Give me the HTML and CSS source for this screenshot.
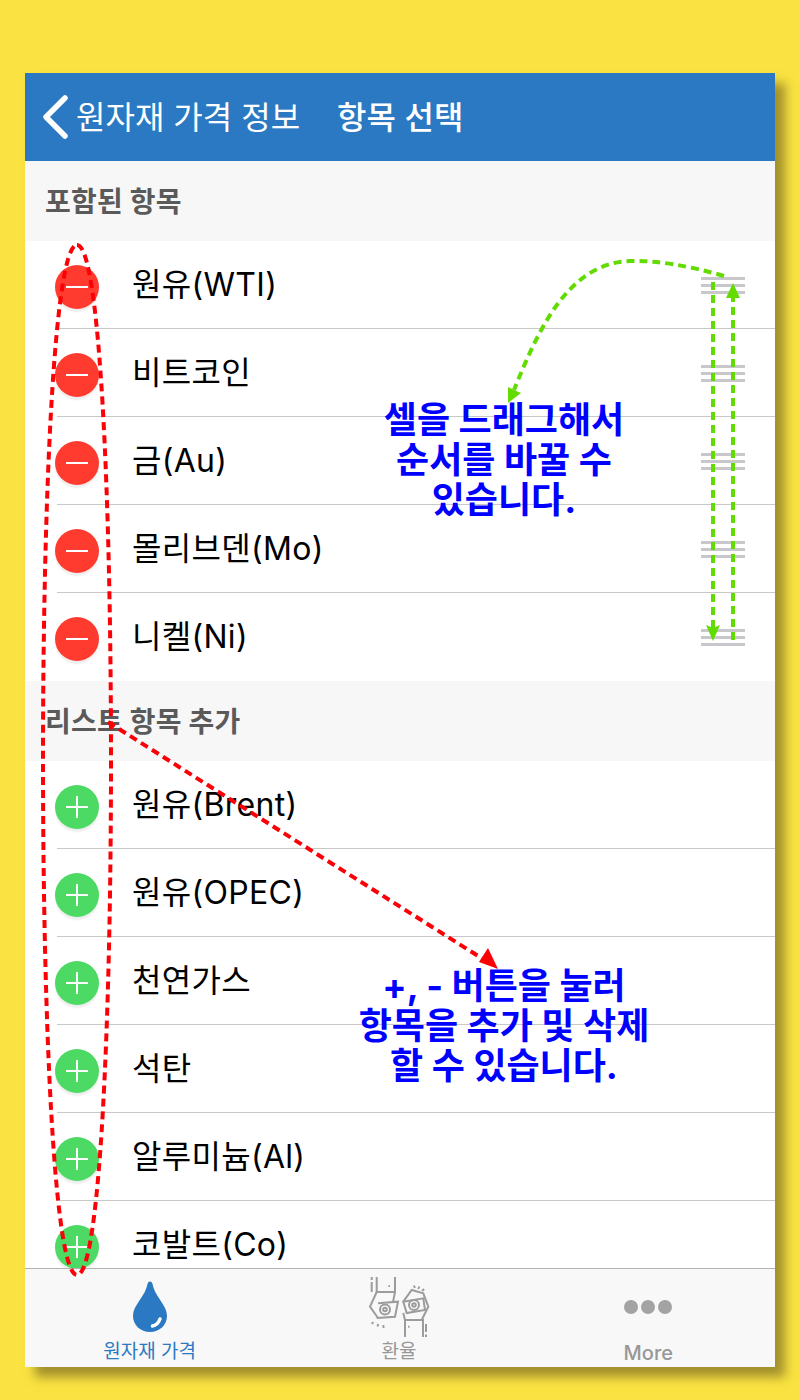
FILE: index.html
```html
<!DOCTYPE html>
<html>
<head>
  <title>항목 선택</title>
  <link rel="stylesheet" href="styles.css">
</head>
<body>
  <div class="phone">
    <header class="navbar">
      <a class="back">
        <svg class="back-icon" width="28" height="44" viewBox="0 0 28 44"><path d="M24 3 L5 22 L24 41" fill="none" stroke="#fff" stroke-width="5.5" stroke-linecap="round" stroke-linejoin="round"/></svg>
        <span>원자재 가격 정보</span>
      </a>
      <h1 class="title">항목 선택</h1>
    </header>

    <main class="list">
      <h2 class="section">포함된 항목</h2>
      <div class="row"><span class="badge minus"></span><span class="name">원유(WTI)</span><span class="grip"><i></i><i></i><i></i></span></div>
      <div class="row"><span class="badge minus"></span><span class="name">비트코인</span><span class="grip"><i></i><i></i><i></i></span></div>
      <div class="row"><span class="badge minus"></span><span class="name">금(Au)</span><span class="grip"><i></i><i></i><i></i></span></div>
      <div class="row"><span class="badge minus"></span><span class="name">몰리브덴(Mo)</span><span class="grip"><i></i><i></i><i></i></span></div>
      <div class="row last"><span class="badge minus"></span><span class="name">니켈(Ni)</span><span class="grip"><i></i><i></i><i></i></span></div>

      <h2 class="section">리스트 항목 추가</h2>
      <div class="row"><span class="badge plus"></span><span class="name">원유(Brent)</span></div>
      <div class="row"><span class="badge plus"></span><span class="name">원유(OPEC)</span></div>
      <div class="row"><span class="badge plus"></span><span class="name">천연가스</span></div>
      <div class="row"><span class="badge plus"></span><span class="name">석탄</span></div>
      <div class="row"><span class="badge plus"></span><span class="name">알루미늄(Al)</span></div>
      <div class="row"><span class="badge plus"></span><span class="name">코발트(Co)</span></div>
    </main>

    <nav class="tabbar">
      <a class="tab active">
        <svg width="34" height="51" viewBox="0 0 34 51"><path d="M17 0.500 C19.500 0.500 19.500 4 21 8 C24 17 34 25 34 35 C34 44 26.500 51 17 51 C7.500 51 0 44 0 35 C0 25 10 17 13 8 C14.500 4 14.500 0.500 17 0.500 Z" fill="#2a79c2"/><path d="M19.500 45 C23 44.500 25.500 42 27 38" fill="none" stroke="#fff" stroke-width="3.500" stroke-linecap="round"/></svg>
        <span>원자재 가격</span>
      </a>
      <a class="tab exchange">
        <svg width="62" height="62" viewBox="0 0 62 62" fill="none" stroke="#9c9c9c" stroke-width="2">
          <path d="M3.700 1v3M3.700 6v10M8.700 1V16H27V1M20.500 10h1.500"/>
          <path d="M8.700 16L2 30.700L10 42M27 16L25 26"/>
          <path d="M10 27.300L30 25.700L27 40.700L8.700 42"/>
          <circle cx="17" cy="33.500" r="5"/><circle cx="17" cy="33.500" r="1.800"/>
          <path d="M5.300 46l-1.500 2M10.300 48l-.8 2.500M15.300 49l.3 3"/>
          <path d="M37 61V44H55V61M40 50.700h1.500M58 48v8M58 58.500v2.500"/>
          <path d="M53.700 44L60.300 30.700L55.300 17.300L43.700 14L35.300 25.700M37 44L35.300 37"/>
          <path d="M35.300 25.700L55.300 22.300L57 34L38.700 37Z"/>
          <circle cx="46" cy="29" r="5"/><circle cx="46" cy="29" r="1.800"/>
          <path d="M46 9.500l.8 2.500M51.300 10.500l-1 2.500M56 13l-1.800 2"/>
        </svg>
        <span>환율</span>
      </a>
      <a class="tab more">
        <span class="dots"><i></i><i></i><i></i></span>
        <span>More</span>
      </a>
    </nav>

    <p class="note note-drag">셀을 드래그해서<br>순서를 바꿀 수<br>있습니다.</p>
    <p class="note note-add">+, - 버튼을 눌러<br>항목을 추가 및 삭제<br>할 수 있습니다.</p>

    <svg class="marks" width="750" height="1294" viewBox="25 73 750 1294" fill="none">
      <path d="M77 245 C100 245 111 500 111 760 C111 1020 100 1275 77 1275 C54 1275 43 1020 43 760 C43 500 54 245 77 245 Z" stroke="#fb0007" stroke-width="4" stroke-dasharray="8 5"/>
      <path d="M108 722 L486 961" stroke="#fb0007" stroke-width="4" stroke-dasharray="8 5"/>
      <path d="M498 969 L479 962 L488 948 Z" fill="#fb0007"/>
      <path d="M724 276 C690 266 655 260 630 261 C570 263 540 325 514 390" stroke="#62dc00" stroke-width="4" stroke-dasharray="8 5"/>
      <path d="M508 403 L508 387 L514 390 L521 393 Z" fill="#62dc00"/>
      <path d="M713 282 V630" stroke="#62dc00" stroke-width="4" stroke-dasharray="8 5"/>
      <path d="M713 641 L706 625 L713 628 L720 625 Z" fill="#62dc00"/>
      <path d="M733 640 V292" stroke="#62dc00" stroke-width="4" stroke-dasharray="8 5"/>
      <path d="M733 283 L726 298 L740 298 Z" fill="#62dc00"/>
    </svg>
  </div>
</body>
</html>
```

FILE: styles.css
```css
* {
  box-sizing: border-box;
}
body {
  margin: 0;
  height: 1400px;
  padding: 73px 25px 0;
  background-color: #f9e241;
  font-family: Inter, "Noto Sans CJK KR", sans-serif;
  overflow: hidden;
}
.phone {
  position: relative;
  display: flex;
  flex-direction: column;
  height: 1294px;
  background-color: #fff;
  box-shadow: 10px 10px 10px #a2902c;
}
.navbar {
  display: flex;
  align-items: center;
  height: 88px;
  padding-left: 16px;
  background-color: #2a79c2;
  color: #fff;
  flex-shrink: 0;
}
.back {
  display: flex;
  align-items: center;
  gap: 7px;
  font-size: 32px;
}
.back span {
  padding-bottom: 4px;
}
.title {
  margin: 0 0 4px 37px;
  font-size: 32px;
  font-weight: 500;
}
.list {
  flex: 1;
  overflow: hidden;
}
.section {
  display: flex;
  align-items: center;
  height: 80px;
  margin: 0;
  padding: 0 0 3px 20px;
  background-color: #f7f7f7;
  color: #5a5a5a;
  font-size: 28px;
  font-weight: 700;
  letter-spacing: 0.2px;
}
.row {
  position: relative;
  display: flex;
  align-items: center;
  height: 88px;
  padding-left: 30px;
  background-color: #fff;
  color: #000;
}
.row::after {
  content: "";
  position: absolute;
  left: 32px;
  right: 0;
  bottom: 0;
  height: 1px;
  background-color: #c8c8c8;
}
.row.last::after {
  display: none;
}
.name {
  margin-left: 33px;
  padding-bottom: 6px;
  font-size: 32px;
  letter-spacing: 0.3px;
}
.badge {
  position: relative;
  width: 44px;
  height: 44px;
  margin-top: 4px;
  border-radius: 50%;
  box-shadow: 0 3px 2px #eee;
  flex-shrink: 0;
}
.badge::before,
.badge.plus::after {
  content: "";
  position: absolute;
  left: 11px;
  top: 21px;
  width: 22px;
  height: 2px;
  background-color: #fff;
}
.badge.plus::after {
  left: 21px;
  top: 11px;
  width: 2px;
  height: 22px;
}
.minus {
  background-color: #ff3b30;
}
.plus {
  background-color: #4cd964;
}
.grip {
  position: absolute;
  left: 676px;
  top: 36px;
  display: flex;
  flex-direction: column;
  gap: 4px;
}
.grip i {
  display: block;
  width: 44px;
  height: 3px;
  background-color: #c7c7cc;
}
.tabbar {
  display: flex;
  height: 99px;
  padding-right: 2px;
  flex-shrink: 0;
  border-top: 1px solid #b2b2b2;
  background-color: #f8f8f8;
}
.tab {
  display: flex;
  flex-direction: column;
  align-items: center;
  flex: 1;
  color: #979797;
  font-size: 19px;
  line-height: 24px;
}
.tab svg {
  flex-shrink: 0;
}
.tab.active {
  color: #2a79c2;
}
.tab.active svg {
  margin-top: 12px;
  margin-bottom: 8px;
}
.tab.exchange svg {
  margin-top: 7px;
  margin-bottom: 2px;
}
.more {
  font-size: 20px;
  font-weight: 500;
}
.dots {
  display: flex;
  gap: 3px;
  height: 14px;
  margin-top: 31px;
  margin-bottom: 27px;
}
.dots i {
  width: 14px;
  height: 14px;
  border-radius: 50%;
  background-color: #a3a3a3;
}
.note {
  position: absolute;
  left: 229px;
  width: 500px;
  margin: 0;
  color: #0000ff;
  font-size: 36px;
  font-weight: 700;
  line-height: 40px;
  text-align: center;
}
.note-drag {
  top: 327px;
}
.note-add {
  top: 893px;
}
.marks {
  position: absolute;
  left: 0;
  top: 0;
  pointer-events: none;
}
```
